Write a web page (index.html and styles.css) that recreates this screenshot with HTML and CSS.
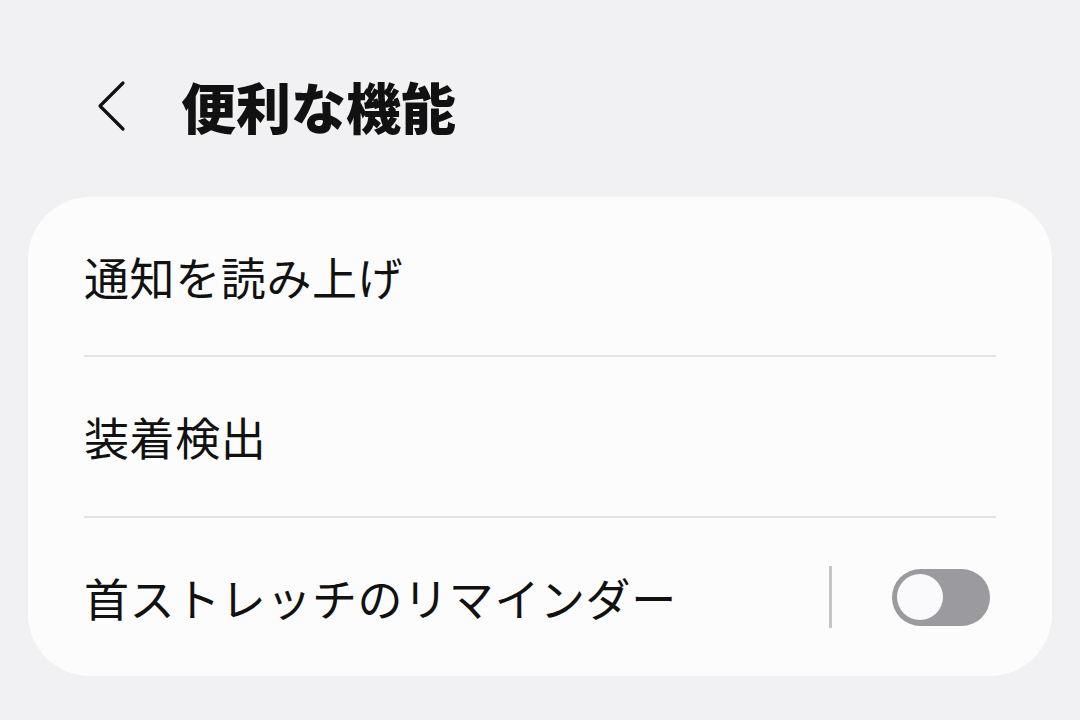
FILE: index.html
```html
<!DOCTYPE html>
<html lang="ja">
<head>
    <meta charset="UTF-8">
    <title>便利な機能</title>
    <link rel="stylesheet" href="styles.css">
</head>
<body>
    <div class="header">
        <svg class="back" width="32" height="52" viewBox="0 0 32 52">
            <path d="M28 3 L5 26 L28 49" fill="none" stroke="#111" stroke-width="3.2" stroke-linecap="round" stroke-linejoin="round"/>
        </svg>
        <h1>便利な機能</h1>
    </div>
    <div class="card">
        <div class="row">通知を読み上げ</div>
        <div class="line"></div>
        <div class="row">装着検出</div>
        <div class="line"></div>
        <div class="row">
            <span class="label">首ストレッチのリマインダー</span>
            <span class="vbar"></span>
            <span class="switch"><span class="knob"></span></span>
        </div>
    </div>
</body>
</html>
```

FILE: styles.css
```css
body {
    margin: 0;
    background-color: #f1f1f3;
    font-family: "Noto Sans CJK JP", "Noto Sans", sans-serif;
    color: #111;
    width: 1080px;
    height: 720px;
    overflow: hidden;
}
.header {
    display: flex;
    align-items: center;
    padding: 46px 0 32px 95px;
    box-sizing: border-box;
    height: 197px;
}
.back {
    margin-right: 54px;
}
h1 {
    margin: 0;
    font-size: 55px;
    font-weight: 900;
    line-height: 1;
}
.card {
    margin: 0 28px;
    background-color: #fcfcfc;
    border-radius: 62px;
    padding: 0 56px;
}
.row {
    height: 159px;
    display: flex;
    align-items: center;
    font-size: 45px;
    letter-spacing: 0.6px;
    line-height: 1;
}
.row:first-child {
    height: 158px;
}
.row:last-child {
    height: 158px;
}
.line {
    height: 2px;
    background-color: #e3e3e4;
}
.label {
    flex: 1;
}
.vbar {
    width: 3px;
    height: 62px;
    background-color: #c5c5c6;
    margin-right: 60px;
}
.switch {
    width: 98px;
    height: 57px;
    border-radius: 29px;
    background-color: #9b9a9f;
    box-sizing: border-box;
    padding: 5px;
    margin-right: 6px;
    display: flex;
    align-items: center;
}
.knob {
    width: 46px;
    height: 46px;
    border-radius: 50%;
    background-color: #fafafc;
}
```
